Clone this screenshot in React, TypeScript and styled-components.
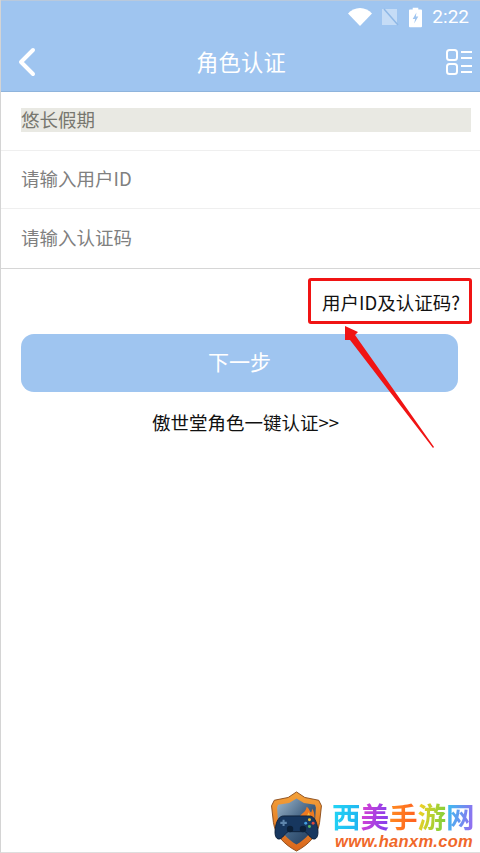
import styled, { createGlobalStyle } from 'styled-components'

const cjk = `"Noto Sans CJK SC", "Noto Sans", sans-serif`

const GlobalStyle = createGlobalStyle`
  html, body {
    margin: 0;
    padding: 0;
    background: #fff;
  }
  * {
    box-sizing: border-box;
  }
`

const Screen = styled.div`
  position: relative;
  width: 480px;
  height: 853px;
  overflow: hidden;
  background: #fff;
  border-left: 1px solid #d4d4d4;
  border-bottom: 1px solid #dedede;
  font-family: ${cjk};
`

const Header = styled.header`
  height: 92px;
  background: #9fc5f0;
  border-top: 1px solid #b9c9dc;
  border-bottom: 1px solid #8fb4dc;
  display: flex;
  flex-direction: column;
`

const StatusBar = styled.div`
  height: 32px;
  padding-right: 11px;
  display: flex;
  align-items: center;
  justify-content: flex-end;
  color: #fff;
`

const StatusIcons = styled.div`
  display: flex;
  align-items: center;
  gap: 10px;
  margin-right: 10px;
`

const Clock = styled.span`
  font-family: Roboto, sans-serif;
  font-size: 19px;
  line-height: 32px;
`

const NavBar = styled.div`
  flex: 1;
  padding: 0 8px 0 17px;
  display: flex;
  align-items: center;
  justify-content: space-between;
  color: #fff;
`

const Title = styled.h1`
  margin: 0 0 2px;
  font-size: 22.2px;
  font-weight: 400;
  line-height: 30px;
  letter-spacing: 0.2px;
  color: #fff;
`

const Form = styled.div`
  border-bottom: 1px solid #d6d6d6;
`

const Row = styled.div<{ $height: number; $last?: boolean }>`
  height: ${p => p.$height}px;
  padding: 0 9px 0 20px;
  display: flex;
  align-items: center;
  border-bottom: ${p => (p.$last ? 'none' : '1px solid #efefef')};
`

const SavedName = styled.div`
  width: 100%;
  height: 24px;
  margin-bottom: 2px;
  line-height: 22px;
  font-size: 18.5px;
  color: #77776f;
  background: #e9e9e3;
`

const Placeholder = styled.span`
  font-size: 18.5px;
  line-height: 24px;
  padding-bottom: 4px;
  color: #808080;
`

const HelpRow = styled.div`
  height: 65px;
  padding: 18px 20px 0 0;
  display: flex;
  justify-content: flex-end;
`

const HelpText = styled.span`
  font-size: 18.5px;
  line-height: 30px;
  color: #111;
`

const NextButton = styled.button`
  display: block;
  width: 437px;
  height: 58px;
  margin-left: 20px;
  padding: 0 0 5px;
  border: none;
  border-radius: 13px;
  background: #9fc5f0;
  color: #fff;
  font-family: ${cjk};
  font-size: 21px;
`

const QuickLink = styled.div`
  margin: 16px 0 0 10px;
  text-align: center;
  font-size: 18.5px;
  line-height: 28px;
  color: #111;
`

const Callout = styled.div`
  position: absolute;
  left: 307px;
  top: 278px;
  width: 164px;
  height: 46px;
  border: 3px solid #f01414;
  border-radius: 3px;
`

const Arrow = styled.svg`
  position: absolute;
  left: 339px;
  top: 322px;
`

const Watermark = styled.div`
  position: absolute;
  left: 268px;
  bottom: 0;
  height: 61px;
  display: flex;
  align-items: flex-start;
  gap: 8px;
`

const Badge = styled.svg`
  display: block;
`

const BrandText = styled.div`
  padding-top: 8px;
  display: flex;
  flex-direction: column;
  align-items: flex-start;
`

const BrandName = styled.div`
  font-size: 28.5px;
  line-height: 33px;
  font-weight: 700;
  white-space: nowrap;
`

const BrandChar = styled.span<{ $from: string; $to: string }>`
  background: linear-gradient(100deg, ${p => p.$from}, ${p => p.$to});
  -webkit-background-clip: text;
  background-clip: text;
  color: transparent;
`

const BrandUrl = styled.div`
  font-family: "Liberation Sans", sans-serif;
  font-size: 16.5px;
  line-height: 19px;
  font-weight: 700;
  font-style: italic;
  letter-spacing: 0.3px;
  margin-left: 3px;
  color: #f0682a;
`

const brandChars = [
  { c: '西', from: '#22d8f5', to: '#20b0f0' },
  { c: '美', from: '#e040d0', to: '#7a40f0' },
  { c: '手', from: '#ff9020', to: '#ff5a20' },
  { c: '游', from: '#ffd020', to: '#70d040' },
  { c: '网', from: '#30c8f0', to: '#a060f0' },
]

function StatusIconSet() {
  return (
    <StatusIcons>
      <svg width="24" height="18" viewBox="0 0 24 18">
        <path d="M0 5.5C3 2.2 7.3 0 12 0s9 2.2 12 5.5L12 18z" fill="#fff" />
      </svg>
      <svg width="17" height="18" viewBox="0 0 17 18">
        <path d="M0 1h15v16H0z" fill="#fff" opacity="0.4" />
        <path d="M2 1l14 16" stroke="#8fb8e6" strokeWidth="1.5" />
      </svg>
      <svg width="13" height="21" viewBox="0 0 14 21">
        <path
          d="M4 0h6v2h3a1 1 0 0 1 1 1v17a1 1 0 0 1-1 1H1a1 1 0 0 1-1-1V3a1 1 0 0 1 1-1h3z"
          fill="#fff"
        />
        <path d="M8 5L4 12h2.6L5.6 17 10 9.5H7.4z" fill="#9fc5f0" />
      </svg>
    </StatusIcons>
  )
}

function BackIcon() {
  return (
    <svg width="18" height="30" viewBox="0 0 18 30">
      <path
        d="M15 3L3 15l12 12"
        fill="none"
        stroke="#fff"
        strokeWidth="4"
        strokeLinecap="round"
        strokeLinejoin="round"
      />
    </svg>
  )
}

function MenuIcon() {
  return (
    <svg width="26" height="26" viewBox="0 0 26 26">
      <g fill="none" stroke="#fff" strokeWidth="2">
        <rect x="1" y="1" width="10" height="10" rx="2.5" />
        <rect x="1" y="15" width="10" height="10" rx="2.5" />
        <path d="M15 3h11M15 9h11M15 17h11M15 23h11" />
      </g>
    </svg>
  )
}

function ShieldBadge() {
  return (
    <Badge width="55" height="61" viewBox="0 0 56 66">
      <defs>
        <linearGradient id="rim" x1="0" y1="0" x2="0" y2="1">
          <stop offset="0" stopColor="#f4a23a" />
          <stop offset="1" stopColor="#d9661c" />
        </linearGradient>
        <linearGradient id="plate" x1="0" y1="0" x2="1" y2="1">
          <stop offset="0" stopColor="#9fb8cc" />
          <stop offset="0.55" stopColor="#3f5f80" />
          <stop offset="1" stopColor="#1c3555" />
        </linearGradient>
      </defs>
      <path
        d="M28 1l9 6 15 3 3 6-2 18c-2 14-12 24-25 31C15 58 5 48 3 34L1 16l3-6 15-3z"
        fill="url(#rim)"
        stroke="#8a4a18"
        strokeWidth="1"
      />
      <path
        d="M28 8l8 5 12 2 1 3-1 15c-2 11-10 19-20 25C18 52 10 44 8 33L7 18l1-3 12-2z"
        fill="url(#plate)"
      />
      <path d="M30 30c4-8 8-6 9-13 4 3 3 6 5 6 1-2 1-4 1-4 3 5 3 11 1 15z" fill="#ee7a20" />
      <path d="M36 31c2-4 4-4 5-8 2 3 2 6 1 9z" fill="#ffc23a" />
      <path
        d="M14 27h28c5 0 8 6 9 14 1 7-1 11-4 11-4 0-6-6-10-8H19c-4 2-6 8-10 8-3 0-5-4-4-11 1-8 4-14 9-14z"
        fill="#17375f"
        stroke="#0d2038"
        strokeWidth="1"
      />
      <circle cx="21" cy="41" r="3.5" fill="#0c2038" />
      <circle cx="35" cy="41" r="3.5" fill="#0c2038" />
      <path d="M14 31v7M10.5 34.5h7" stroke="#5f86ad" strokeWidth="2.2" />
      <circle cx="42" cy="31" r="1.6" fill="#f2c230" />
      <circle cx="46" cy="35" r="1.6" fill="#e2463a" />
      <circle cx="38" cy="35" r="1.6" fill="#45a0e0" />
      <circle cx="42" cy="38.5" r="1.6" fill="#58b860" />
    </Badge>
  )
}

export default function App() {
  return (
    <>
      <GlobalStyle />
      <Screen>
        <Header>
          <StatusBar>
            <StatusIconSet />
            <Clock>2:22</Clock>
          </StatusBar>
          <NavBar>
            <BackIcon />
            <Title>角色认证</Title>
            <MenuIcon />
          </NavBar>
        </Header>

        <Form>
          <Row $height={59}>
            <SavedName>悠长假期</SavedName>
          </Row>
          <Row $height={58}>
            <Placeholder>请输入用户ID</Placeholder>
          </Row>
          <Row $height={59} $last>
            <Placeholder>请输入认证码</Placeholder>
          </Row>
        </Form>

        <HelpRow>
          <HelpText>用户ID及认证码?</HelpText>
        </HelpRow>
        <NextButton>下一步</NextButton>
        <QuickLink>傲世堂角色一键认证&gt;&gt;</QuickLink>

        <Callout />
        <Arrow width="100" height="130" viewBox="0 0 100 130">
          <path d="M5 4l13 6-3 3 79 112-1 1L10 18l-5 0z" fill="#f01414" />
        </Arrow>

        <Watermark>
          <ShieldBadge />
          <BrandText>
            <BrandName>
              {brandChars.map(b => (
                <BrandChar key={b.c} $from={b.from} $to={b.to}>
                  {b.c}
                </BrandChar>
              ))}
            </BrandName>
            <BrandUrl>www.hanxm.com</BrandUrl>
          </BrandText>
        </Watermark>
      </Screen>
    </>
  )
}
